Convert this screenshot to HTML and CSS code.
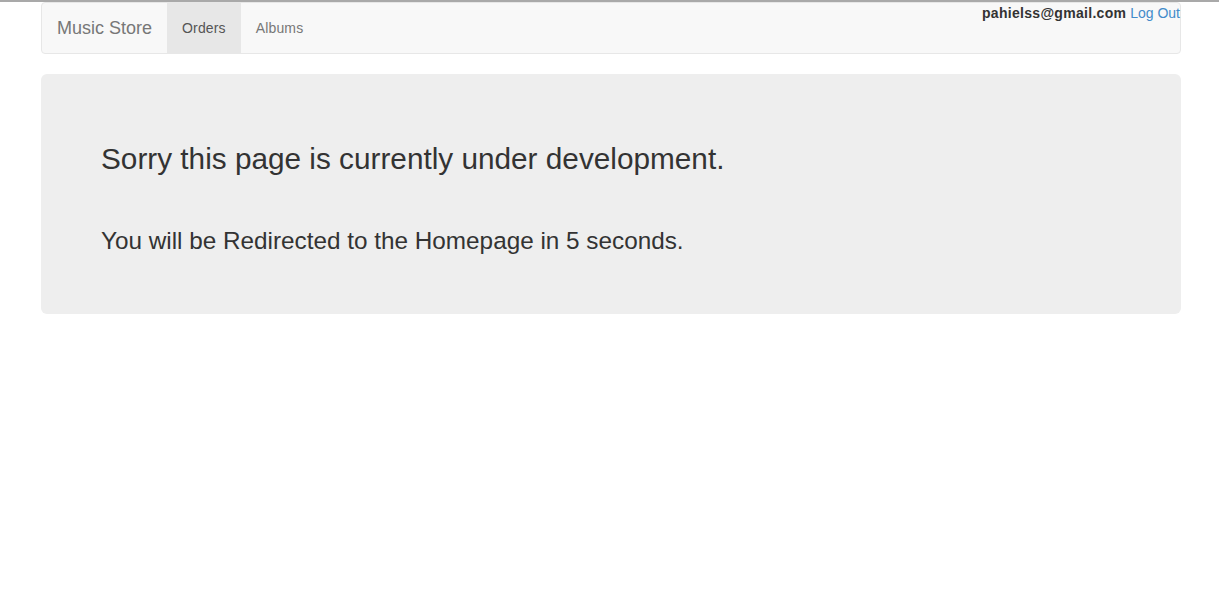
FILE: index.html
```html
<!DOCTYPE html>
<html>
<head>
<meta charset="utf-8">
<title>Music Store</title>
<link rel="stylesheet" href="styles.css">
</head>
<body>
<div class="topline"></div>
<div class="page">
  <nav class="navbar">
    <a class="brand" href="#">Music Store</a>
    <ul class="nav">
      <li class="active"><a href="#">Orders</a></li>
      <li><a href="#">Albums</a></li>
    </ul>
    <div class="user"><strong>pahielss@gmail.com</strong> <a href="#">Log Out</a></div>
  </nav>
  <div class="jumbotron">
    <h2 class="title">Sorry this page is currently under development.</h2>
    <h3 class="lead">You will be Redirected to the Homepage in 5 seconds.</h3>
  </div>
</div>
</body>
</html>
```
FILE: styles.css
```css
html, body {
  margin: 0;
  padding: 0;
  background: #fff;
  font-family: "Liberation Sans", Arial, sans-serif;
  font-size: 14px;
  line-height: 1.42857;
  color: #333;
}
.topline {
  height: 2px;
  background: #a9a9a9;
}
.page {
  width: 1140px;
  margin-left: 41px;
}
.navbar {
  position: relative;
  display: flex;
  align-items: stretch;
  height: 50px;
  background: #f8f8f8;
  border: 1px solid #e7e7e7;
  border-radius: 4px;
}
.brand {
  display: block;
  padding: 15px;
  font-size: 18px;
  line-height: 20px;
  color: #777;
  text-decoration: none;
}
.nav {
  display: flex;
  list-style: none;
  margin: 0;
  padding: 0;
}
.nav li a {
  display: block;
  padding: 15px;
  line-height: 20px;
  color: #777;
  text-decoration: none;
  letter-spacing: 0.15px;
}
.nav li.active a {
  background: #e7e7e7;
  color: #555;
}
.user {
  position: absolute;
  top: 0;
  right: 0;
  line-height: 20px;
  color: #333;
}
.user strong {
  font-weight: bold;
  letter-spacing: 0.3px;
}
.user a {
  color: #428bca;
  text-decoration: none;
}
.jumbotron {
  margin-top: 20px;
  background: #eee;
  border-radius: 6px;
  padding: 48px 60px;
  height: 144px;
}
.title {
  margin: 20px 0 0;
  font-size: 29.75px;
  font-weight: normal;
  line-height: 33px;
}
.lead {
  margin: 53px 0 0;
  font-size: 24.3px;
  font-weight: normal;
  line-height: 26px;
}
```
